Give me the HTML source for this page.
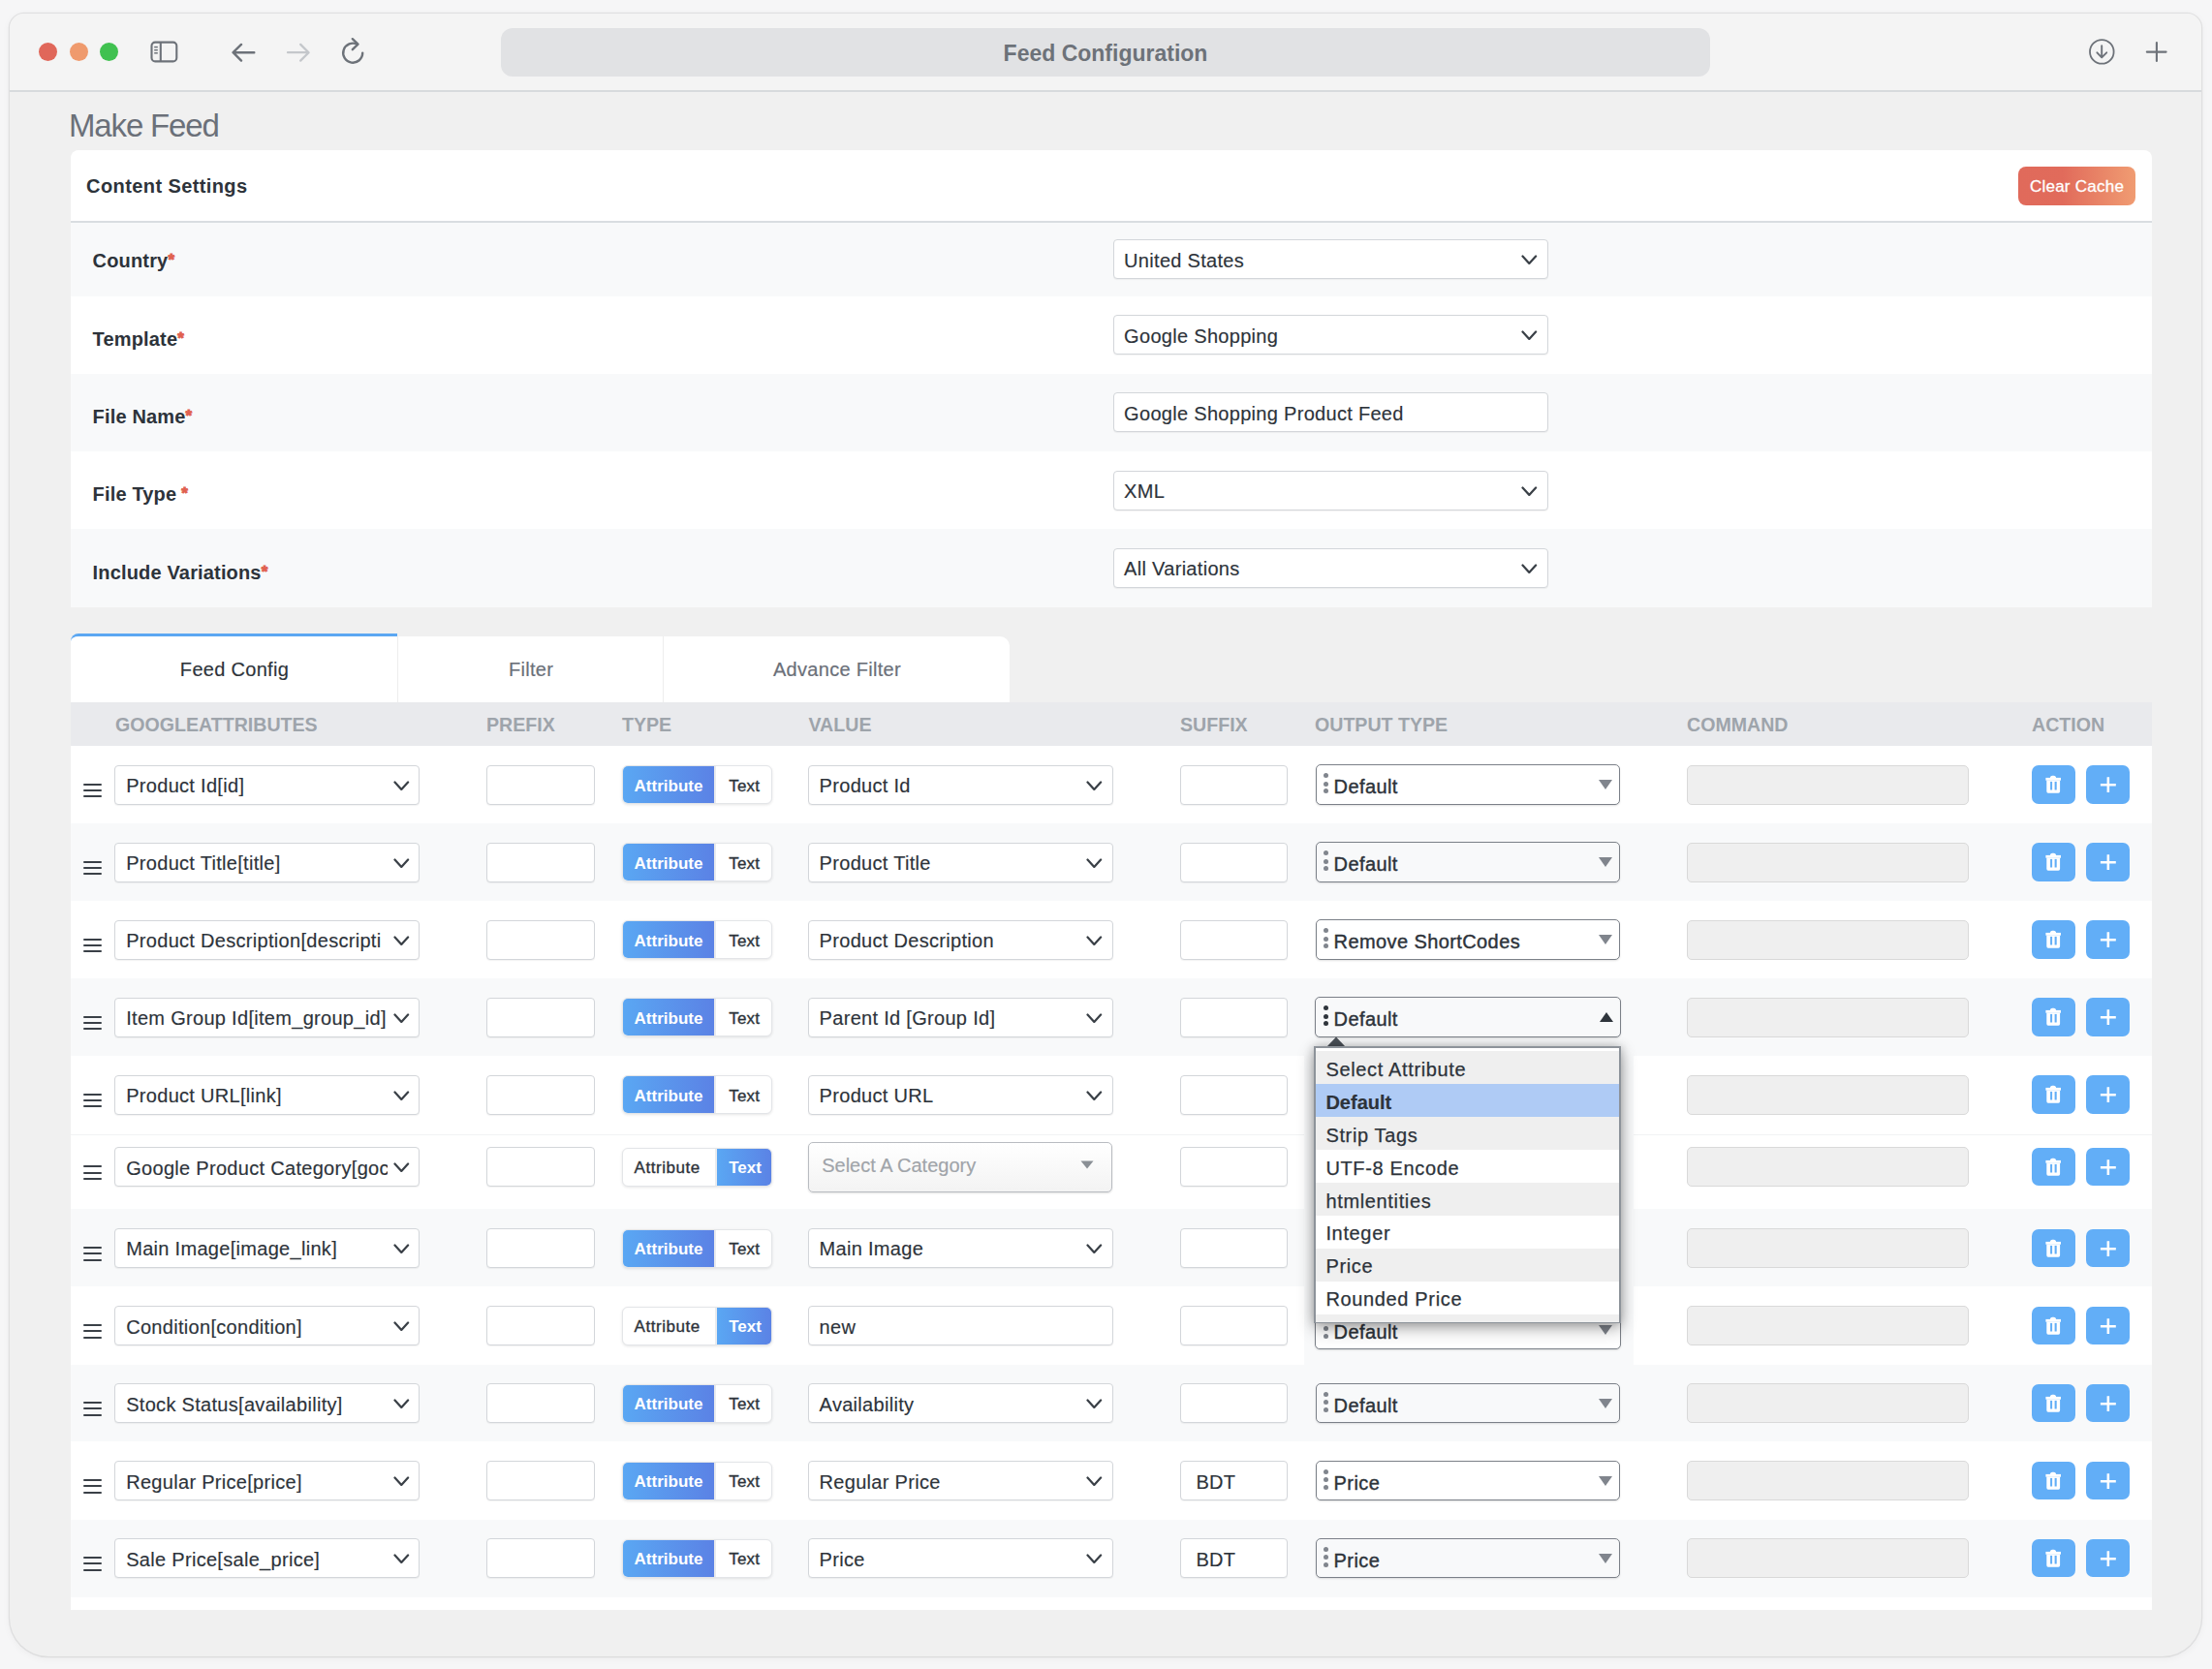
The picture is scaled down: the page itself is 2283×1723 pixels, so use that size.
<!DOCTYPE html><html><head><meta charset="utf-8"><style>
*{box-sizing:border-box;margin:0;padding:0}
html,body{width:2283px;height:1723px;overflow:hidden;background:#f6f6f7;font-family:"Liberation Sans", sans-serif;color:#2d333a}
.a{position:absolute}
.win{position:absolute;left:9.5px;top:13.5px;width:2262px;height:1696.5px;border-radius:15px 15px 40px 40px;background:#f0f0f0;overflow:hidden;box-shadow:0 0 0 1.3px rgba(0,0,0,0.075),0 2px 8px rgba(0,0,0,0.05)}
.tb{position:absolute;left:0;top:0;width:2262px;height:81px;background:#f4f4f4;border-bottom:2px solid #d7dadd}
.url{position:absolute;left:507.5px;top:15.5px;width:1248px;height:50px;border-radius:12px;background:#e1e2e4}
.card{position:absolute;background:#fff}
.lbl{position:absolute;margin-left:-0.4px;left:96px;font-weight:700;font-size:20px;line-height:20px;letter-spacing:0.16px;white-space:nowrap;color:#2d333a}
.req{color:#e0604f;-webkit-text-stroke:0.9px #e0604f;font-size:17px;vertical-align:2px}
.inp{position:absolute;background:#fff;border:1.5px solid #d3d6da;border-radius:4px;height:41px;box-shadow:0 1px 1px rgba(0,0,0,0.05)}
.txt{position:absolute;margin-left:-1.4px;font-size:20px;line-height:24px;letter-spacing:0.3px;-webkit-text-stroke:0.15px currentColor;white-space:nowrap;color:#2d333a}
.hd{position:absolute;top:737.5px;font-weight:700;font-size:19.6px;line-height:20px;color:#9ea4ab;white-space:nowrap}
.tog{position:absolute;margin-left:-1px;height:40px;width:155px;border-radius:6px;background:#fff;border:1px solid #e3e5e8;box-shadow:0 1px 3px rgba(0,0,0,0.10);overflow:hidden}
.on{position:absolute;top:0;height:100%;background:linear-gradient(90deg,#5aa7f3,#5b82e5)}
.tg{position:absolute;font-size:17px;line-height:17px;white-space:nowrap}
.cmd{position:absolute;left:1741px;width:291px;height:41px;background:#efefef;border:1.5px solid #d9d9d9;border-radius:5px}
.btn{position:absolute;width:45px;height:39.2px;border-radius:7px;background:#62aef7}
.ot{position:absolute;left:1357.5px;width:314.5px;height:41.5px;border:1.6px solid #7b8088;border-radius:5px;box-shadow:0 1px 2px rgba(0,0,0,0.12)}
</style></head><body><div class="win"><div class="tb"><div class="a" style="left:30.6px;top:30.4px;width:19.2px;height:19.2px;border-radius:50%;background:#e0675a"></div><div class="a" style="left:62.4px;top:30.4px;width:19.2px;height:19.2px;border-radius:50%;background:#ef9a6d"></div><div class="a" style="left:93.5px;top:30.4px;width:19.2px;height:19.2px;border-radius:50%;background:#40c150"></div><div class="url"></div><div class="a" style="left:507.5px;top:16.6px;width:1248px;height:50px;text-align:center;font-weight:700;font-size:23px;line-height:50px;color:#6d7279">Feed Configuration</div></div></div><svg class="a" style="left:0;top:0;z-index:5" width="2283" height="120" viewBox="0 0 2283 120">
<rect x="156.5" y="43.6" width="25.8" height="19.8" rx="3.6" fill="none" stroke="#6d7279" stroke-width="2.1"/>
<line x1="165.8" y1="43.6" x2="165.8" y2="63.4" stroke="#6d7279" stroke-width="2.1"/>
<line x1="159.2" y1="48.6" x2="162.8" y2="48.6" stroke="#6d7279" stroke-width="1.5"/>
<line x1="159.2" y1="51.7" x2="162.8" y2="51.7" stroke="#6d7279" stroke-width="1.5"/>
<line x1="159.2" y1="54.8" x2="162.8" y2="54.8" stroke="#6d7279" stroke-width="1.5"/>
<path d="M262.3 54.2 H241 M249 45.9 L240.6 54.2 L249 62.6" fill="none" stroke="#6d7279" stroke-width="2.4" stroke-linecap="round" stroke-linejoin="round"/>
<path d="M297 54.2 H318 M310.2 45.9 L318.6 54.2 L310.2 62.6" fill="none" stroke="#c4c7cb" stroke-width="2.3" stroke-linecap="round" stroke-linejoin="round"/>
<path d="M374.2 54.6 A10 10 0 1 1 368.8 45.8" fill="none" stroke="#6d7279" stroke-width="2.4" stroke-linecap="round"/>
<path d="M363.8 40.2 L369.5 45.6 L363.8 51.2" fill="none" stroke="#6d7279" stroke-width="2.4" stroke-linecap="round" stroke-linejoin="round"/>
<circle cx="2169.3" cy="53.4" r="12.3" fill="none" stroke="#6d7279" stroke-width="1.8"/>
<path d="M2169.2 47.2 V59.2 M2164.4 54.3 L2169.2 59.4 L2174.2 54.3" fill="none" stroke="#6d7279" stroke-width="1.9" stroke-linecap="round" stroke-linejoin="round"/>
<path d="M2225.9 44 V63 M2215.8 53.6 H2235.6" fill="none" stroke="#6d7279" stroke-width="2.1" stroke-linecap="round"/>
</svg><div class="a" style="left:71px;top:111.7px;font-size:33px;line-height:36px;letter-spacing:-1.15px;color:#6b7079;white-space:nowrap">Make Feed</div><div class="card" style="left:73px;top:155px;width:2148px;height:472px;border-radius:8px 8px 0 0;overflow:hidden"><div class="a" style="left:0;top:73px;width:2148px;height:1.6px;background:#d9dde1"></div><div class="a" style="left:0;top:75px;width:2148px;height:76px;background:#f8f9fa"></div><div class="a" style="left:0;top:231px;width:2148px;height:80px;background:#f8f9fa"></div><div class="a" style="left:0;top:391px;width:2148px;height:81px;background:#f8f9fa"></div></div><div class="lbl" style="left:89.5px;top:182px;font-size:20px;letter-spacing:0.4px">Content Settings</div><div class="a" style="left:2083px;top:172px;width:121px;height:40px;border-radius:8px;background:linear-gradient(90deg,#e06a5b 0%,#e16b5b 38%,#f09c72 100%)"></div><div class="a" style="left:2083px;top:172px;width:121px;height:40px;line-height:42px;text-align:center;color:#fff;font-size:17px;letter-spacing:0.25px;-webkit-text-stroke:0.3px #fff">Clear Cache</div><div class="lbl" style="top:258.9px">Country<span class="req">*</span></div><div class="lbl" style="top:339.7px">Template<span class="req">*</span></div><div class="lbl" style="top:420px">File Name<span class="req">*</span></div><div class="lbl" style="top:500px">File Type<span class="req"> *</span></div><div class="lbl" style="top:580.5px">Include Variations<span class="req">*</span></div><div class="inp" style="left:1148.5px;top:247.2px;width:449px"></div><div class="txt" style="left:1161.5px;top:256.7px">United States</div><svg class="a" style="left:1569.5px;top:263.2px" width="17" height="11" viewBox="0 0 17 11"><path d="M1.5 1.5 L8.3 8.9 L15.1 1.5" fill="none" stroke="#3a4047" stroke-width="2.25" stroke-linecap="round" stroke-linejoin="round"/></svg><div class="inp" style="left:1148.5px;top:325.4px;width:449px"></div><div class="txt" style="left:1161.5px;top:334.9px">Google Shopping</div><svg class="a" style="left:1569.5px;top:341.4px" width="17" height="11" viewBox="0 0 17 11"><path d="M1.5 1.5 L8.3 8.9 L15.1 1.5" fill="none" stroke="#3a4047" stroke-width="2.25" stroke-linecap="round" stroke-linejoin="round"/></svg><div class="inp" style="left:1148.5px;top:405.4px;width:449px"></div><div class="txt" style="left:1161.5px;top:414.9px">Google Shopping Product Feed</div><div class="inp" style="left:1148.5px;top:485.5px;width:449px"></div><div class="txt" style="left:1161.5px;top:495.0px">XML</div><svg class="a" style="left:1569.5px;top:501.5px" width="17" height="11" viewBox="0 0 17 11"><path d="M1.5 1.5 L8.3 8.9 L15.1 1.5" fill="none" stroke="#3a4047" stroke-width="2.25" stroke-linecap="round" stroke-linejoin="round"/></svg><div class="inp" style="left:1148.5px;top:565.6px;width:449px"></div><div class="txt" style="left:1161.5px;top:575.1px">All Variations</div><svg class="a" style="left:1569.5px;top:581.6px" width="17" height="11" viewBox="0 0 17 11"><path d="M1.5 1.5 L8.3 8.9 L15.1 1.5" fill="none" stroke="#3a4047" stroke-width="2.25" stroke-linecap="round" stroke-linejoin="round"/></svg><div class="card" style="left:73px;top:654px;width:337px;height:71px;border-radius:8px 0 0 0;border-top:3px solid #5ba7f2"></div><div class="card" style="left:410px;top:657px;width:274px;height:68px;border-left:1px solid #ededed"></div><div class="card" style="left:684px;top:657px;width:358px;height:68px;border-left:1px solid #ededed;border-radius:0 10px 0 0"></div><div class="txt" style="margin-left:0;left:73.5px;width:337px;text-align:center;top:679px">Feed Config</div><div class="txt" style="margin-left:0;left:411px;width:274px;text-align:center;top:679px;color:#6b7079;-webkit-text-stroke:0.2px #6b7079">Filter</div><div class="txt" style="margin-left:0;left:685px;width:358px;text-align:center;top:679px;color:#6b7079;-webkit-text-stroke:0.2px #6b7079">Advance Filter</div><div class="card" style="left:73px;top:725px;width:2148px;height:937px"></div><div class="a" style="left:73px;top:725px;width:2148px;height:45px;background:#e9eaed"></div><div class="hd" style="left:119px">GOOGLEATTRIBUTES</div><div class="hd" style="left:502px">PREFIX</div><div class="hd" style="left:642px">TYPE</div><div class="hd" style="left:834.5px">VALUE</div><div class="hd" style="left:1218px">SUFFIX</div><div class="hd" style="left:1357px">OUTPUT TYPE</div><div class="hd" style="left:1741px">COMMAND</div><div class="hd" style="left:2097px">ACTION</div><div class="a" style="left:86px;top:808.5px;width:19px;height:2px;background:#3a4047;border-radius:1px"></div><div class="a" style="left:86px;top:814.7px;width:19px;height:2px;background:#3a4047;border-radius:1px"></div><div class="a" style="left:86px;top:821.2px;width:19px;height:2px;background:#3a4047;border-radius:1px"></div><div class="inp" style="left:118.3px;top:789.5px;width:314.7px"></div><div class="txt" style="left:131.6px;top:799.0px;width:270px;overflow:hidden">Product Id[id]</div><svg class="a" style="left:405.5px;top:805.5px" width="17" height="11" viewBox="0 0 17 11"><path d="M1.5 1.5 L8.3 8.9 L15.1 1.5" fill="none" stroke="#3a4047" stroke-width="2.25" stroke-linecap="round" stroke-linejoin="round"/></svg><div class="inp" style="left:502.3px;top:789.5px;width:111.4px"></div><div class="tog" style="left:642.8px;top:790.3px"><div class="on" style="left:0;width:94.4px"></div><div class="tg" style="left:11.8px;top:11.4px;color:#fff;font-weight:700">Attribute</div><div class="a" style="left:94.4px;top:0;width:2px;height:100%;background:#e9ebee"></div><div class="tg" style="left:109.4px;top:11.4px;color:#2d333a;-webkit-text-stroke:0.35px #2d333a;letter-spacing:0.2px">Text</div></div><div class="inp" style="left:834px;top:789.5px;width:314.5px"></div><div class="txt" style="left:847px;top:799.0px">Product Id</div><svg class="a" style="left:1121px;top:805.5px" width="17" height="11" viewBox="0 0 17 11"><path d="M1.5 1.5 L8.3 8.9 L15.1 1.5" fill="none" stroke="#3a4047" stroke-width="2.25" stroke-linecap="round" stroke-linejoin="round"/></svg><div class="inp" style="left:1218.3px;top:789.5px;width:111.2px"></div><div class="ot" style="top:789.2px;background:#fff"></div><div class="a" style="left:1365.5px;top:798.3px;width:5px;height:5px;border-radius:50%;background:#80858d"></div><div class="a" style="left:1365.5px;top:806.5px;width:5px;height:5px;border-radius:50%;background:#80858d"></div><div class="a" style="left:1365.5px;top:814.3px;width:5px;height:5px;border-radius:50%;background:#80858d"></div><div class="txt" style="left:1378px;top:800.2px;font-size:20px;letter-spacing:0.4px;-webkit-text-stroke:0.4px #2d333a">Default</div><svg class="a" style="left:1650px;top:805.0px" width="14" height="10" viewBox="0 0 14 10"><path d="M0 0 H14 L7 10 Z" fill="#80858d"/></svg><div class="cmd" style="top:789.6px"></div><div class="btn" style="left:2097px;top:790.4px"><svg class="a" style="left:0;top:0" width="45" height="39" viewBox="0 0 45 39"><path d="M14.4 12.9 H30 V15.7 H14.4 Z" fill="#fff"/><path d="M18.8 13.3 Q18.9 10.7 21.4 10.7 H22.5 Q25.1 10.7 25.1 13.3 Z" fill="#fff"/><path d="M15.3 15.4 H29.1 V27.1 Q29.1 28.7 27.5 28.7 H16.9 Q15.3 28.7 15.3 27.1 Z" fill="#fff"/><rect x="19.1" y="16.9" width="2" height="8.6" fill="#62aef7"/><rect x="23.6" y="16.9" width="2.1" height="8.6" fill="#62aef7"/></svg></div><div class="btn" style="left:2153px;top:790.4px"><svg class="a" style="left:0;top:0" width="45" height="39" viewBox="0 0 45 39"><path d="M22.85 12.2 V28.1 M14.9 20.3 H30.8" stroke="#fff" stroke-width="2.55"/></svg></div><div class="a" style="left:73px;top:850px;width:2148px;height:80px;background:#f8f9fa"></div><div class="a" style="left:86px;top:888.5px;width:19px;height:2px;background:#3a4047;border-radius:1px"></div><div class="a" style="left:86px;top:894.7px;width:19px;height:2px;background:#3a4047;border-radius:1px"></div><div class="a" style="left:86px;top:901.2px;width:19px;height:2px;background:#3a4047;border-radius:1px"></div><div class="inp" style="left:118.3px;top:869.5px;width:314.7px"></div><div class="txt" style="left:131.6px;top:879.0px;width:270px;overflow:hidden">Product Title[title]</div><svg class="a" style="left:405.5px;top:885.5px" width="17" height="11" viewBox="0 0 17 11"><path d="M1.5 1.5 L8.3 8.9 L15.1 1.5" fill="none" stroke="#3a4047" stroke-width="2.25" stroke-linecap="round" stroke-linejoin="round"/></svg><div class="inp" style="left:502.3px;top:869.5px;width:111.4px"></div><div class="tog" style="left:642.8px;top:870.3px"><div class="on" style="left:0;width:94.4px"></div><div class="tg" style="left:11.8px;top:11.4px;color:#fff;font-weight:700">Attribute</div><div class="a" style="left:94.4px;top:0;width:2px;height:100%;background:#e9ebee"></div><div class="tg" style="left:109.4px;top:11.4px;color:#2d333a;-webkit-text-stroke:0.35px #2d333a;letter-spacing:0.2px">Text</div></div><div class="inp" style="left:834px;top:869.5px;width:314.5px"></div><div class="txt" style="left:847px;top:879.0px">Product Title</div><svg class="a" style="left:1121px;top:885.5px" width="17" height="11" viewBox="0 0 17 11"><path d="M1.5 1.5 L8.3 8.9 L15.1 1.5" fill="none" stroke="#3a4047" stroke-width="2.25" stroke-linecap="round" stroke-linejoin="round"/></svg><div class="inp" style="left:1218.3px;top:869.5px;width:111.2px"></div><div class="ot" style="top:869.2px;background:#f8f9fa"></div><div class="a" style="left:1365.5px;top:878.3px;width:5px;height:5px;border-radius:50%;background:#80858d"></div><div class="a" style="left:1365.5px;top:886.5px;width:5px;height:5px;border-radius:50%;background:#80858d"></div><div class="a" style="left:1365.5px;top:894.3px;width:5px;height:5px;border-radius:50%;background:#80858d"></div><div class="txt" style="left:1378px;top:880.2px;font-size:20px;letter-spacing:0.4px;-webkit-text-stroke:0.4px #2d333a">Default</div><svg class="a" style="left:1650px;top:885.0px" width="14" height="10" viewBox="0 0 14 10"><path d="M0 0 H14 L7 10 Z" fill="#80858d"/></svg><div class="cmd" style="top:869.6px"></div><div class="btn" style="left:2097px;top:870.4px"><svg class="a" style="left:0;top:0" width="45" height="39" viewBox="0 0 45 39"><path d="M14.4 12.9 H30 V15.7 H14.4 Z" fill="#fff"/><path d="M18.8 13.3 Q18.9 10.7 21.4 10.7 H22.5 Q25.1 10.7 25.1 13.3 Z" fill="#fff"/><path d="M15.3 15.4 H29.1 V27.1 Q29.1 28.7 27.5 28.7 H16.9 Q15.3 28.7 15.3 27.1 Z" fill="#fff"/><rect x="19.1" y="16.9" width="2" height="8.6" fill="#62aef7"/><rect x="23.6" y="16.9" width="2.1" height="8.6" fill="#62aef7"/></svg></div><div class="btn" style="left:2153px;top:870.4px"><svg class="a" style="left:0;top:0" width="45" height="39" viewBox="0 0 45 39"><path d="M22.85 12.2 V28.1 M14.9 20.3 H30.8" stroke="#fff" stroke-width="2.55"/></svg></div><div class="a" style="left:86px;top:968.5px;width:19px;height:2px;background:#3a4047;border-radius:1px"></div><div class="a" style="left:86px;top:974.7px;width:19px;height:2px;background:#3a4047;border-radius:1px"></div><div class="a" style="left:86px;top:981.2px;width:19px;height:2px;background:#3a4047;border-radius:1px"></div><div class="inp" style="left:118.3px;top:949.5px;width:314.7px"></div><div class="txt" style="left:131.6px;top:959.0px;width:270px;overflow:hidden">Product Description[descripti</div><svg class="a" style="left:405.5px;top:965.5px" width="17" height="11" viewBox="0 0 17 11"><path d="M1.5 1.5 L8.3 8.9 L15.1 1.5" fill="none" stroke="#3a4047" stroke-width="2.25" stroke-linecap="round" stroke-linejoin="round"/></svg><div class="inp" style="left:502.3px;top:949.5px;width:111.4px"></div><div class="tog" style="left:642.8px;top:950.3px"><div class="on" style="left:0;width:94.4px"></div><div class="tg" style="left:11.8px;top:11.4px;color:#fff;font-weight:700">Attribute</div><div class="a" style="left:94.4px;top:0;width:2px;height:100%;background:#e9ebee"></div><div class="tg" style="left:109.4px;top:11.4px;color:#2d333a;-webkit-text-stroke:0.35px #2d333a;letter-spacing:0.2px">Text</div></div><div class="inp" style="left:834px;top:949.5px;width:314.5px"></div><div class="txt" style="left:847px;top:959.0px">Product Description</div><svg class="a" style="left:1121px;top:965.5px" width="17" height="11" viewBox="0 0 17 11"><path d="M1.5 1.5 L8.3 8.9 L15.1 1.5" fill="none" stroke="#3a4047" stroke-width="2.25" stroke-linecap="round" stroke-linejoin="round"/></svg><div class="inp" style="left:1218.3px;top:949.5px;width:111.2px"></div><div class="ot" style="top:949.2px;background:#fff"></div><div class="a" style="left:1365.5px;top:958.3px;width:5px;height:5px;border-radius:50%;background:#80858d"></div><div class="a" style="left:1365.5px;top:966.5px;width:5px;height:5px;border-radius:50%;background:#80858d"></div><div class="a" style="left:1365.5px;top:974.3px;width:5px;height:5px;border-radius:50%;background:#80858d"></div><div class="txt" style="left:1378px;top:960.2px;font-size:20px;letter-spacing:0.4px;-webkit-text-stroke:0.4px #2d333a">Remove ShortCodes</div><svg class="a" style="left:1650px;top:965.0px" width="14" height="10" viewBox="0 0 14 10"><path d="M0 0 H14 L7 10 Z" fill="#80858d"/></svg><div class="cmd" style="top:949.6px"></div><div class="btn" style="left:2097px;top:950.4px"><svg class="a" style="left:0;top:0" width="45" height="39" viewBox="0 0 45 39"><path d="M14.4 12.9 H30 V15.7 H14.4 Z" fill="#fff"/><path d="M18.8 13.3 Q18.9 10.7 21.4 10.7 H22.5 Q25.1 10.7 25.1 13.3 Z" fill="#fff"/><path d="M15.3 15.4 H29.1 V27.1 Q29.1 28.7 27.5 28.7 H16.9 Q15.3 28.7 15.3 27.1 Z" fill="#fff"/><rect x="19.1" y="16.9" width="2" height="8.6" fill="#62aef7"/><rect x="23.6" y="16.9" width="2.1" height="8.6" fill="#62aef7"/></svg></div><div class="btn" style="left:2153px;top:950.4px"><svg class="a" style="left:0;top:0" width="45" height="39" viewBox="0 0 45 39"><path d="M22.85 12.2 V28.1 M14.9 20.3 H30.8" stroke="#fff" stroke-width="2.55"/></svg></div><div class="a" style="left:73px;top:1010px;width:2148px;height:80px;background:#f8f9fa"></div><div class="a" style="left:86px;top:1048.5px;width:19px;height:2px;background:#3a4047;border-radius:1px"></div><div class="a" style="left:86px;top:1054.7px;width:19px;height:2px;background:#3a4047;border-radius:1px"></div><div class="a" style="left:86px;top:1061.2px;width:19px;height:2px;background:#3a4047;border-radius:1px"></div><div class="inp" style="left:118.3px;top:1029.5px;width:314.7px"></div><div class="txt" style="left:131.6px;top:1039.0px;width:270px;overflow:hidden">Item Group Id[item_group_id]</div><svg class="a" style="left:405.5px;top:1045.5px" width="17" height="11" viewBox="0 0 17 11"><path d="M1.5 1.5 L8.3 8.9 L15.1 1.5" fill="none" stroke="#3a4047" stroke-width="2.25" stroke-linecap="round" stroke-linejoin="round"/></svg><div class="inp" style="left:502.3px;top:1029.5px;width:111.4px"></div><div class="tog" style="left:642.8px;top:1030.3px"><div class="on" style="left:0;width:94.4px"></div><div class="tg" style="left:11.8px;top:11.4px;color:#fff;font-weight:700">Attribute</div><div class="a" style="left:94.4px;top:0;width:2px;height:100%;background:#e9ebee"></div><div class="tg" style="left:109.4px;top:11.4px;color:#2d333a;-webkit-text-stroke:0.35px #2d333a;letter-spacing:0.2px">Text</div></div><div class="inp" style="left:834px;top:1029.5px;width:314.5px"></div><div class="txt" style="left:847px;top:1039.0px">Parent Id [Group Id]</div><svg class="a" style="left:1121px;top:1045.5px" width="17" height="11" viewBox="0 0 17 11"><path d="M1.5 1.5 L8.3 8.9 L15.1 1.5" fill="none" stroke="#3a4047" stroke-width="2.25" stroke-linecap="round" stroke-linejoin="round"/></svg><div class="inp" style="left:1218.3px;top:1029.5px;width:111.2px"></div><div class="ot" style="left:1356.6px;width:316.7px;top:1029.2px;background:#f8f9fa"></div><div class="a" style="left:1365.5px;top:1038.3px;width:5px;height:5px;border-radius:50%;background:#2f353c"></div><div class="a" style="left:1365.5px;top:1046.5px;width:5px;height:5px;border-radius:50%;background:#2f353c"></div><div class="a" style="left:1365.5px;top:1054.3px;width:5px;height:5px;border-radius:50%;background:#2f353c"></div><div class="txt" style="left:1378px;top:1040.2px;font-size:20px;letter-spacing:0.4px;-webkit-text-stroke:0.4px #2d333a">Default</div><svg class="a" style="left:1651px;top:1045.0px" width="14" height="10" viewBox="0 0 14 10"><path d="M7 0 L14 10 H0 Z" fill="#2f353c"/></svg><div class="cmd" style="top:1029.6px"></div><div class="btn" style="left:2097px;top:1030.4px"><svg class="a" style="left:0;top:0" width="45" height="39" viewBox="0 0 45 39"><path d="M14.4 12.9 H30 V15.7 H14.4 Z" fill="#fff"/><path d="M18.8 13.3 Q18.9 10.7 21.4 10.7 H22.5 Q25.1 10.7 25.1 13.3 Z" fill="#fff"/><path d="M15.3 15.4 H29.1 V27.1 Q29.1 28.7 27.5 28.7 H16.9 Q15.3 28.7 15.3 27.1 Z" fill="#fff"/><rect x="19.1" y="16.9" width="2" height="8.6" fill="#62aef7"/><rect x="23.6" y="16.9" width="2.1" height="8.6" fill="#62aef7"/></svg></div><div class="btn" style="left:2153px;top:1030.4px"><svg class="a" style="left:0;top:0" width="45" height="39" viewBox="0 0 45 39"><path d="M22.85 12.2 V28.1 M14.9 20.3 H30.8" stroke="#fff" stroke-width="2.55"/></svg></div><div class="a" style="left:86px;top:1128.5px;width:19px;height:2px;background:#3a4047;border-radius:1px"></div><div class="a" style="left:86px;top:1134.7px;width:19px;height:2px;background:#3a4047;border-radius:1px"></div><div class="a" style="left:86px;top:1141.2px;width:19px;height:2px;background:#3a4047;border-radius:1px"></div><div class="inp" style="left:118.3px;top:1109.5px;width:314.7px"></div><div class="txt" style="left:131.6px;top:1119.0px;width:270px;overflow:hidden">Product URL[link]</div><svg class="a" style="left:405.5px;top:1125.5px" width="17" height="11" viewBox="0 0 17 11"><path d="M1.5 1.5 L8.3 8.9 L15.1 1.5" fill="none" stroke="#3a4047" stroke-width="2.25" stroke-linecap="round" stroke-linejoin="round"/></svg><div class="inp" style="left:502.3px;top:1109.5px;width:111.4px"></div><div class="tog" style="left:642.8px;top:1110.3px"><div class="on" style="left:0;width:94.4px"></div><div class="tg" style="left:11.8px;top:11.4px;color:#fff;font-weight:700">Attribute</div><div class="a" style="left:94.4px;top:0;width:2px;height:100%;background:#e9ebee"></div><div class="tg" style="left:109.4px;top:11.4px;color:#2d333a;-webkit-text-stroke:0.35px #2d333a;letter-spacing:0.2px">Text</div></div><div class="inp" style="left:834px;top:1109.5px;width:314.5px"></div><div class="txt" style="left:847px;top:1119.0px">Product URL</div><svg class="a" style="left:1121px;top:1125.5px" width="17" height="11" viewBox="0 0 17 11"><path d="M1.5 1.5 L8.3 8.9 L15.1 1.5" fill="none" stroke="#3a4047" stroke-width="2.25" stroke-linecap="round" stroke-linejoin="round"/></svg><div class="inp" style="left:1218.3px;top:1109.5px;width:111.2px"></div><div class="ot" style="top:1109.2px;background:#fff"></div><div class="a" style="left:1365.5px;top:1118.3px;width:5px;height:5px;border-radius:50%;background:#80858d"></div><div class="a" style="left:1365.5px;top:1126.5px;width:5px;height:5px;border-radius:50%;background:#80858d"></div><div class="a" style="left:1365.5px;top:1134.3px;width:5px;height:5px;border-radius:50%;background:#80858d"></div><div class="txt" style="left:1378px;top:1120.2px;font-size:20px;letter-spacing:0.4px;-webkit-text-stroke:0.4px #2d333a">Default</div><svg class="a" style="left:1650px;top:1125.0px" width="14" height="10" viewBox="0 0 14 10"><path d="M0 0 H14 L7 10 Z" fill="#80858d"/></svg><div class="cmd" style="top:1109.6px"></div><div class="btn" style="left:2097px;top:1110.4px"><svg class="a" style="left:0;top:0" width="45" height="39" viewBox="0 0 45 39"><path d="M14.4 12.9 H30 V15.7 H14.4 Z" fill="#fff"/><path d="M18.8 13.3 Q18.9 10.7 21.4 10.7 H22.5 Q25.1 10.7 25.1 13.3 Z" fill="#fff"/><path d="M15.3 15.4 H29.1 V27.1 Q29.1 28.7 27.5 28.7 H16.9 Q15.3 28.7 15.3 27.1 Z" fill="#fff"/><rect x="19.1" y="16.9" width="2" height="8.6" fill="#62aef7"/><rect x="23.6" y="16.9" width="2.1" height="8.6" fill="#62aef7"/></svg></div><div class="btn" style="left:2153px;top:1110.4px"><svg class="a" style="left:0;top:0" width="45" height="39" viewBox="0 0 45 39"><path d="M22.85 12.2 V28.1 M14.9 20.3 H30.8" stroke="#fff" stroke-width="2.55"/></svg></div><div class="a" style="left:73px;top:1171px;width:2148px;height:1px;background:#f1f2f4"></div><div class="a" style="left:86px;top:1203.3px;width:19px;height:2px;background:#3a4047;border-radius:1px"></div><div class="a" style="left:86px;top:1209.5px;width:19px;height:2px;background:#3a4047;border-radius:1px"></div><div class="a" style="left:86px;top:1216.0px;width:19px;height:2px;background:#3a4047;border-radius:1px"></div><div class="inp" style="left:118.3px;top:1184.3px;width:314.7px"></div><div class="txt" style="left:131.6px;top:1193.8px;width:270px;overflow:hidden">Google Product Category[goc</div><svg class="a" style="left:405.5px;top:1200.3px" width="17" height="11" viewBox="0 0 17 11"><path d="M1.5 1.5 L8.3 8.9 L15.1 1.5" fill="none" stroke="#3a4047" stroke-width="2.25" stroke-linecap="round" stroke-linejoin="round"/></svg><div class="inp" style="left:502.3px;top:1184.3px;width:111.4px"></div><div class="tog" style="left:642.8px;top:1185.1px"><div class="on" style="left:97px;width:57px"></div><div class="a" style="left:95px;top:0;width:2px;height:100%;background:#e9ebee"></div><div class="tg" style="left:11.8px;top:11.4px;color:#2d333a;-webkit-text-stroke:0.35px #2d333a;letter-spacing:0.55px">Attribute</div><div class="tg" style="left:109.4px;top:11.4px;color:#fff;font-weight:700">Text</div></div><div class="a" style="left:834.4px;top:1178.5px;width:314px;height:52.2px;border:1.5px solid #b9bcc1;border-radius:5px;background:linear-gradient(#ffffff,#f3f3f3);box-shadow:0 1px 2px rgba(0,0,0,0.12)"></div><div class="txt" style="left:849.6px;top:1191px;color:#a0a4a9;letter-spacing:0">Select A Category</div><svg class="a" style="left:1115px;top:1198px" width="14" height="9" viewBox="0 0 14 9"><path d="M0.5 0.5 H13.5 L7 8.5 Z" fill="#8a8f95"/></svg><div class="inp" style="left:1218.3px;top:1184.3px;width:111.2px"></div><div class="cmd" style="top:1184.3999999999999px"></div><div class="btn" style="left:2097px;top:1185.2px"><svg class="a" style="left:0;top:0" width="45" height="39" viewBox="0 0 45 39"><path d="M14.4 12.9 H30 V15.7 H14.4 Z" fill="#fff"/><path d="M18.8 13.3 Q18.9 10.7 21.4 10.7 H22.5 Q25.1 10.7 25.1 13.3 Z" fill="#fff"/><path d="M15.3 15.4 H29.1 V27.1 Q29.1 28.7 27.5 28.7 H16.9 Q15.3 28.7 15.3 27.1 Z" fill="#fff"/><rect x="19.1" y="16.9" width="2" height="8.6" fill="#62aef7"/><rect x="23.6" y="16.9" width="2.1" height="8.6" fill="#62aef7"/></svg></div><div class="btn" style="left:2153px;top:1185.2px"><svg class="a" style="left:0;top:0" width="45" height="39" viewBox="0 0 45 39"><path d="M22.85 12.2 V28.1 M14.9 20.3 H30.8" stroke="#fff" stroke-width="2.55"/></svg></div><div class="a" style="left:73px;top:1248.3px;width:2148px;height:80.20000000000005px;background:#f8f9fa"></div><div class="a" style="left:86px;top:1286.8px;width:19px;height:2px;background:#3a4047;border-radius:1px"></div><div class="a" style="left:86px;top:1293.0px;width:19px;height:2px;background:#3a4047;border-radius:1px"></div><div class="a" style="left:86px;top:1299.5px;width:19px;height:2px;background:#3a4047;border-radius:1px"></div><div class="inp" style="left:118.3px;top:1267.8px;width:314.7px"></div><div class="txt" style="left:131.6px;top:1277.3px;width:270px;overflow:hidden">Main Image[image_link]</div><svg class="a" style="left:405.5px;top:1283.8px" width="17" height="11" viewBox="0 0 17 11"><path d="M1.5 1.5 L8.3 8.9 L15.1 1.5" fill="none" stroke="#3a4047" stroke-width="2.25" stroke-linecap="round" stroke-linejoin="round"/></svg><div class="inp" style="left:502.3px;top:1267.8px;width:111.4px"></div><div class="tog" style="left:642.8px;top:1268.6px"><div class="on" style="left:0;width:94.4px"></div><div class="tg" style="left:11.8px;top:11.4px;color:#fff;font-weight:700">Attribute</div><div class="a" style="left:94.4px;top:0;width:2px;height:100%;background:#e9ebee"></div><div class="tg" style="left:109.4px;top:11.4px;color:#2d333a;-webkit-text-stroke:0.35px #2d333a;letter-spacing:0.2px">Text</div></div><div class="inp" style="left:834px;top:1267.8px;width:314.5px"></div><div class="txt" style="left:847px;top:1277.3px">Main Image</div><svg class="a" style="left:1121px;top:1283.8px" width="17" height="11" viewBox="0 0 17 11"><path d="M1.5 1.5 L8.3 8.9 L15.1 1.5" fill="none" stroke="#3a4047" stroke-width="2.25" stroke-linecap="round" stroke-linejoin="round"/></svg><div class="inp" style="left:1218.3px;top:1267.8px;width:111.2px"></div><div class="ot" style="top:1267.5px;background:#f8f9fa"></div><div class="a" style="left:1365.5px;top:1276.6px;width:5px;height:5px;border-radius:50%;background:#80858d"></div><div class="a" style="left:1365.5px;top:1284.8px;width:5px;height:5px;border-radius:50%;background:#80858d"></div><div class="a" style="left:1365.5px;top:1292.6px;width:5px;height:5px;border-radius:50%;background:#80858d"></div><div class="txt" style="left:1378px;top:1278.5px;font-size:20px;letter-spacing:0.4px;-webkit-text-stroke:0.4px #2d333a">Default</div><svg class="a" style="left:1650px;top:1283.3px" width="14" height="10" viewBox="0 0 14 10"><path d="M0 0 H14 L7 10 Z" fill="#80858d"/></svg><div class="cmd" style="top:1267.8999999999999px"></div><div class="btn" style="left:2097px;top:1268.7px"><svg class="a" style="left:0;top:0" width="45" height="39" viewBox="0 0 45 39"><path d="M14.4 12.9 H30 V15.7 H14.4 Z" fill="#fff"/><path d="M18.8 13.3 Q18.9 10.7 21.4 10.7 H22.5 Q25.1 10.7 25.1 13.3 Z" fill="#fff"/><path d="M15.3 15.4 H29.1 V27.1 Q29.1 28.7 27.5 28.7 H16.9 Q15.3 28.7 15.3 27.1 Z" fill="#fff"/><rect x="19.1" y="16.9" width="2" height="8.6" fill="#62aef7"/><rect x="23.6" y="16.9" width="2.1" height="8.6" fill="#62aef7"/></svg></div><div class="btn" style="left:2153px;top:1268.7px"><svg class="a" style="left:0;top:0" width="45" height="39" viewBox="0 0 45 39"><path d="M22.85 12.2 V28.1 M14.9 20.3 H30.8" stroke="#fff" stroke-width="2.55"/></svg></div><div class="a" style="left:1345.6px;top:1090px;width:340px;height:318.7px;background:#f8f9fa"></div><div class="a" style="left:86px;top:1367.0px;width:19px;height:2px;background:#3a4047;border-radius:1px"></div><div class="a" style="left:86px;top:1373.2px;width:19px;height:2px;background:#3a4047;border-radius:1px"></div><div class="a" style="left:86px;top:1379.7px;width:19px;height:2px;background:#3a4047;border-radius:1px"></div><div class="inp" style="left:118.3px;top:1348.0px;width:314.7px"></div><div class="txt" style="left:131.6px;top:1357.5px;width:270px;overflow:hidden">Condition[condition]</div><svg class="a" style="left:405.5px;top:1364.0px" width="17" height="11" viewBox="0 0 17 11"><path d="M1.5 1.5 L8.3 8.9 L15.1 1.5" fill="none" stroke="#3a4047" stroke-width="2.25" stroke-linecap="round" stroke-linejoin="round"/></svg><div class="inp" style="left:502.3px;top:1348.0px;width:111.4px"></div><div class="tog" style="left:642.8px;top:1348.8px"><div class="on" style="left:97px;width:57px"></div><div class="a" style="left:95px;top:0;width:2px;height:100%;background:#e9ebee"></div><div class="tg" style="left:11.8px;top:11.4px;color:#2d333a;-webkit-text-stroke:0.35px #2d333a;letter-spacing:0.55px">Attribute</div><div class="tg" style="left:109.4px;top:11.4px;color:#fff;font-weight:700">Text</div></div><div class="inp" style="left:834px;top:1348.0px;width:314.5px"></div><div class="txt" style="left:847px;top:1357.5px">new</div><div class="inp" style="left:1218.3px;top:1348.0px;width:111.2px"></div><div class="ot" style="left:1356.6px;width:316.7px;top:1351.7px;background:#fff"></div><div class="a" style="left:1365.5px;top:1360.8px;width:5px;height:5px;border-radius:50%;background:#80858d"></div><div class="a" style="left:1365.5px;top:1369.0px;width:5px;height:5px;border-radius:50%;background:#80858d"></div><div class="a" style="left:1365.5px;top:1376.8px;width:5px;height:5px;border-radius:50%;background:#80858d"></div><div class="txt" style="left:1378px;top:1362.7px;font-size:20px;letter-spacing:0.4px;-webkit-text-stroke:0.4px #2d333a">Default</div><svg class="a" style="left:1650px;top:1367.5px" width="14" height="10" viewBox="0 0 14 10"><path d="M0 0 H14 L7 10 Z" fill="#80858d"/></svg><div class="cmd" style="top:1348.1px"></div><div class="btn" style="left:2097px;top:1348.9px"><svg class="a" style="left:0;top:0" width="45" height="39" viewBox="0 0 45 39"><path d="M14.4 12.9 H30 V15.7 H14.4 Z" fill="#fff"/><path d="M18.8 13.3 Q18.9 10.7 21.4 10.7 H22.5 Q25.1 10.7 25.1 13.3 Z" fill="#fff"/><path d="M15.3 15.4 H29.1 V27.1 Q29.1 28.7 27.5 28.7 H16.9 Q15.3 28.7 15.3 27.1 Z" fill="#fff"/><rect x="19.1" y="16.9" width="2" height="8.6" fill="#62aef7"/><rect x="23.6" y="16.9" width="2.1" height="8.6" fill="#62aef7"/></svg></div><div class="btn" style="left:2153px;top:1348.9px"><svg class="a" style="left:0;top:0" width="45" height="39" viewBox="0 0 45 39"><path d="M22.85 12.2 V28.1 M14.9 20.3 H30.8" stroke="#fff" stroke-width="2.55"/></svg></div><div class="a" style="left:73px;top:1408.7px;width:2148px;height:79.79999999999995px;background:#f8f9fa"></div><div class="a" style="left:86px;top:1447.2px;width:19px;height:2px;background:#3a4047;border-radius:1px"></div><div class="a" style="left:86px;top:1453.4px;width:19px;height:2px;background:#3a4047;border-radius:1px"></div><div class="a" style="left:86px;top:1459.9px;width:19px;height:2px;background:#3a4047;border-radius:1px"></div><div class="inp" style="left:118.3px;top:1428.2px;width:314.7px"></div><div class="txt" style="left:131.6px;top:1437.7px;width:270px;overflow:hidden">Stock Status[availability]</div><svg class="a" style="left:405.5px;top:1444.2px" width="17" height="11" viewBox="0 0 17 11"><path d="M1.5 1.5 L8.3 8.9 L15.1 1.5" fill="none" stroke="#3a4047" stroke-width="2.25" stroke-linecap="round" stroke-linejoin="round"/></svg><div class="inp" style="left:502.3px;top:1428.2px;width:111.4px"></div><div class="tog" style="left:642.8px;top:1429.0px"><div class="on" style="left:0;width:94.4px"></div><div class="tg" style="left:11.8px;top:11.4px;color:#fff;font-weight:700">Attribute</div><div class="a" style="left:94.4px;top:0;width:2px;height:100%;background:#e9ebee"></div><div class="tg" style="left:109.4px;top:11.4px;color:#2d333a;-webkit-text-stroke:0.35px #2d333a;letter-spacing:0.2px">Text</div></div><div class="inp" style="left:834px;top:1428.2px;width:314.5px"></div><div class="txt" style="left:847px;top:1437.7px">Availability</div><svg class="a" style="left:1121px;top:1444.2px" width="17" height="11" viewBox="0 0 17 11"><path d="M1.5 1.5 L8.3 8.9 L15.1 1.5" fill="none" stroke="#3a4047" stroke-width="2.25" stroke-linecap="round" stroke-linejoin="round"/></svg><div class="inp" style="left:1218.3px;top:1428.2px;width:111.2px"></div><div class="ot" style="top:1427.9px;background:#f8f9fa"></div><div class="a" style="left:1365.5px;top:1437.0px;width:5px;height:5px;border-radius:50%;background:#80858d"></div><div class="a" style="left:1365.5px;top:1445.2px;width:5px;height:5px;border-radius:50%;background:#80858d"></div><div class="a" style="left:1365.5px;top:1453.0px;width:5px;height:5px;border-radius:50%;background:#80858d"></div><div class="txt" style="left:1378px;top:1438.9px;font-size:20px;letter-spacing:0.4px;-webkit-text-stroke:0.4px #2d333a">Default</div><svg class="a" style="left:1650px;top:1443.7px" width="14" height="10" viewBox="0 0 14 10"><path d="M0 0 H14 L7 10 Z" fill="#80858d"/></svg><div class="cmd" style="top:1428.3px"></div><div class="btn" style="left:2097px;top:1429.1000000000001px"><svg class="a" style="left:0;top:0" width="45" height="39" viewBox="0 0 45 39"><path d="M14.4 12.9 H30 V15.7 H14.4 Z" fill="#fff"/><path d="M18.8 13.3 Q18.9 10.7 21.4 10.7 H22.5 Q25.1 10.7 25.1 13.3 Z" fill="#fff"/><path d="M15.3 15.4 H29.1 V27.1 Q29.1 28.7 27.5 28.7 H16.9 Q15.3 28.7 15.3 27.1 Z" fill="#fff"/><rect x="19.1" y="16.9" width="2" height="8.6" fill="#62aef7"/><rect x="23.6" y="16.9" width="2.1" height="8.6" fill="#62aef7"/></svg></div><div class="btn" style="left:2153px;top:1429.1000000000001px"><svg class="a" style="left:0;top:0" width="45" height="39" viewBox="0 0 45 39"><path d="M22.85 12.2 V28.1 M14.9 20.3 H30.8" stroke="#fff" stroke-width="2.55"/></svg></div><div class="a" style="left:86px;top:1527.0px;width:19px;height:2px;background:#3a4047;border-radius:1px"></div><div class="a" style="left:86px;top:1533.2px;width:19px;height:2px;background:#3a4047;border-radius:1px"></div><div class="a" style="left:86px;top:1539.7px;width:19px;height:2px;background:#3a4047;border-radius:1px"></div><div class="inp" style="left:118.3px;top:1508.0px;width:314.7px"></div><div class="txt" style="left:131.6px;top:1517.5px;width:270px;overflow:hidden">Regular Price[price]</div><svg class="a" style="left:405.5px;top:1524.0px" width="17" height="11" viewBox="0 0 17 11"><path d="M1.5 1.5 L8.3 8.9 L15.1 1.5" fill="none" stroke="#3a4047" stroke-width="2.25" stroke-linecap="round" stroke-linejoin="round"/></svg><div class="inp" style="left:502.3px;top:1508.0px;width:111.4px"></div><div class="tog" style="left:642.8px;top:1508.8px"><div class="on" style="left:0;width:94.4px"></div><div class="tg" style="left:11.8px;top:11.4px;color:#fff;font-weight:700">Attribute</div><div class="a" style="left:94.4px;top:0;width:2px;height:100%;background:#e9ebee"></div><div class="tg" style="left:109.4px;top:11.4px;color:#2d333a;-webkit-text-stroke:0.35px #2d333a;letter-spacing:0.2px">Text</div></div><div class="inp" style="left:834px;top:1508.0px;width:314.5px"></div><div class="txt" style="left:847px;top:1517.5px">Regular Price</div><svg class="a" style="left:1121px;top:1524.0px" width="17" height="11" viewBox="0 0 17 11"><path d="M1.5 1.5 L8.3 8.9 L15.1 1.5" fill="none" stroke="#3a4047" stroke-width="2.25" stroke-linecap="round" stroke-linejoin="round"/></svg><div class="inp" style="left:1218.3px;top:1508.0px;width:111.2px"></div><div class="txt" style="left:1235.8px;top:1517.5px">BDT</div><div class="ot" style="top:1507.7px;background:#fff"></div><div class="a" style="left:1365.5px;top:1516.8px;width:5px;height:5px;border-radius:50%;background:#80858d"></div><div class="a" style="left:1365.5px;top:1525.0px;width:5px;height:5px;border-radius:50%;background:#80858d"></div><div class="a" style="left:1365.5px;top:1532.8px;width:5px;height:5px;border-radius:50%;background:#80858d"></div><div class="txt" style="left:1378px;top:1518.7px;font-size:20px;letter-spacing:0.4px;-webkit-text-stroke:0.4px #2d333a">Price</div><svg class="a" style="left:1650px;top:1523.5px" width="14" height="10" viewBox="0 0 14 10"><path d="M0 0 H14 L7 10 Z" fill="#80858d"/></svg><div class="cmd" style="top:1508.1px"></div><div class="btn" style="left:2097px;top:1508.9px"><svg class="a" style="left:0;top:0" width="45" height="39" viewBox="0 0 45 39"><path d="M14.4 12.9 H30 V15.7 H14.4 Z" fill="#fff"/><path d="M18.8 13.3 Q18.9 10.7 21.4 10.7 H22.5 Q25.1 10.7 25.1 13.3 Z" fill="#fff"/><path d="M15.3 15.4 H29.1 V27.1 Q29.1 28.7 27.5 28.7 H16.9 Q15.3 28.7 15.3 27.1 Z" fill="#fff"/><rect x="19.1" y="16.9" width="2" height="8.6" fill="#62aef7"/><rect x="23.6" y="16.9" width="2.1" height="8.6" fill="#62aef7"/></svg></div><div class="btn" style="left:2153px;top:1508.9px"><svg class="a" style="left:0;top:0" width="45" height="39" viewBox="0 0 45 39"><path d="M22.85 12.2 V28.1 M14.9 20.3 H30.8" stroke="#fff" stroke-width="2.55"/></svg></div><div class="a" style="left:73px;top:1568.5px;width:2148px;height:80.0px;background:#f8f9fa"></div><div class="a" style="left:86px;top:1607.0px;width:19px;height:2px;background:#3a4047;border-radius:1px"></div><div class="a" style="left:86px;top:1613.2px;width:19px;height:2px;background:#3a4047;border-radius:1px"></div><div class="a" style="left:86px;top:1619.7px;width:19px;height:2px;background:#3a4047;border-radius:1px"></div><div class="inp" style="left:118.3px;top:1588.0px;width:314.7px"></div><div class="txt" style="left:131.6px;top:1597.5px;width:270px;overflow:hidden">Sale Price[sale_price]</div><svg class="a" style="left:405.5px;top:1604.0px" width="17" height="11" viewBox="0 0 17 11"><path d="M1.5 1.5 L8.3 8.9 L15.1 1.5" fill="none" stroke="#3a4047" stroke-width="2.25" stroke-linecap="round" stroke-linejoin="round"/></svg><div class="inp" style="left:502.3px;top:1588.0px;width:111.4px"></div><div class="tog" style="left:642.8px;top:1588.8px"><div class="on" style="left:0;width:94.4px"></div><div class="tg" style="left:11.8px;top:11.4px;color:#fff;font-weight:700">Attribute</div><div class="a" style="left:94.4px;top:0;width:2px;height:100%;background:#e9ebee"></div><div class="tg" style="left:109.4px;top:11.4px;color:#2d333a;-webkit-text-stroke:0.35px #2d333a;letter-spacing:0.2px">Text</div></div><div class="inp" style="left:834px;top:1588.0px;width:314.5px"></div><div class="txt" style="left:847px;top:1597.5px">Price</div><svg class="a" style="left:1121px;top:1604.0px" width="17" height="11" viewBox="0 0 17 11"><path d="M1.5 1.5 L8.3 8.9 L15.1 1.5" fill="none" stroke="#3a4047" stroke-width="2.25" stroke-linecap="round" stroke-linejoin="round"/></svg><div class="inp" style="left:1218.3px;top:1588.0px;width:111.2px"></div><div class="txt" style="left:1235.8px;top:1597.5px">BDT</div><div class="ot" style="top:1587.7px;background:#f8f9fa"></div><div class="a" style="left:1365.5px;top:1596.8px;width:5px;height:5px;border-radius:50%;background:#80858d"></div><div class="a" style="left:1365.5px;top:1605.0px;width:5px;height:5px;border-radius:50%;background:#80858d"></div><div class="a" style="left:1365.5px;top:1612.8px;width:5px;height:5px;border-radius:50%;background:#80858d"></div><div class="txt" style="left:1378px;top:1598.7px;font-size:20px;letter-spacing:0.4px;-webkit-text-stroke:0.4px #2d333a">Price</div><svg class="a" style="left:1650px;top:1603.5px" width="14" height="10" viewBox="0 0 14 10"><path d="M0 0 H14 L7 10 Z" fill="#80858d"/></svg><div class="cmd" style="top:1588.1px"></div><div class="btn" style="left:2097px;top:1588.9px"><svg class="a" style="left:0;top:0" width="45" height="39" viewBox="0 0 45 39"><path d="M14.4 12.9 H30 V15.7 H14.4 Z" fill="#fff"/><path d="M18.8 13.3 Q18.9 10.7 21.4 10.7 H22.5 Q25.1 10.7 25.1 13.3 Z" fill="#fff"/><path d="M15.3 15.4 H29.1 V27.1 Q29.1 28.7 27.5 28.7 H16.9 Q15.3 28.7 15.3 27.1 Z" fill="#fff"/><rect x="19.1" y="16.9" width="2" height="8.6" fill="#62aef7"/><rect x="23.6" y="16.9" width="2.1" height="8.6" fill="#62aef7"/></svg></div><div class="btn" style="left:2153px;top:1588.9px"><svg class="a" style="left:0;top:0" width="45" height="39" viewBox="0 0 45 39"><path d="M22.85 12.2 V28.1 M14.9 20.3 H30.8" stroke="#fff" stroke-width="2.55"/></svg></div><svg class="a" style="left:1369px;top:1070px" width="20" height="11" viewBox="0 0 20 11"><path d="M10 0.5 L19.5 10.5 H0.5 Z" fill="#4b5158"/></svg><div class="a" style="left:1356.3px;top:1080px;width:317px;height:286px;background:#fff;border:2px solid #8d939a;border-bottom-width:1.5px;box-shadow:0 6px 16px rgba(0,0,0,0.30), 0 0 10px rgba(0,0,0,0.22);overflow:hidden"><div class="a" style="left:0;top:3.4px;width:100%;height:34px;background:#efefef"></div><div class="txt" style="left:11.5px;top:9.9px;font-size:20px;font-weight:400;letter-spacing:0.65px;-webkit-text-stroke:0.25px #2d333a">Select Attribute</div><div class="a" style="left:0;top:37.3px;width:100%;height:34px;background:#afcbf5"></div><div class="txt" style="left:11.5px;top:43.8px;font-size:20px;font-weight:700;letter-spacing:0px;">Default</div><div class="a" style="left:0;top:71.2px;width:100%;height:34px;background:#efefef"></div><div class="txt" style="left:11.5px;top:77.7px;font-size:20px;font-weight:400;letter-spacing:0.65px;-webkit-text-stroke:0.25px #2d333a">Strip Tags</div><div class="a" style="left:0;top:105.1px;width:100%;height:34px;background:#fff"></div><div class="txt" style="left:11.5px;top:111.6px;font-size:20px;font-weight:400;letter-spacing:0.65px;-webkit-text-stroke:0.25px #2d333a">UTF-8 Encode</div><div class="a" style="left:0;top:139.0px;width:100%;height:34px;background:#efefef"></div><div class="txt" style="left:11.5px;top:145.5px;font-size:20px;font-weight:400;letter-spacing:0.65px;-webkit-text-stroke:0.25px #2d333a">htmlentities</div><div class="a" style="left:0;top:172.9px;width:100%;height:34px;background:#fff"></div><div class="txt" style="left:11.5px;top:179.4px;font-size:20px;font-weight:400;letter-spacing:0.65px;-webkit-text-stroke:0.25px #2d333a">Integer</div><div class="a" style="left:0;top:206.79999999999998px;width:100%;height:34px;background:#efefef"></div><div class="txt" style="left:11.5px;top:213.29999999999998px;font-size:20px;font-weight:400;letter-spacing:0.65px;-webkit-text-stroke:0.25px #2d333a">Price</div><div class="a" style="left:0;top:240.7px;width:100%;height:34px;background:#fff"></div><div class="txt" style="left:11.5px;top:247.2px;font-size:20px;font-weight:400;letter-spacing:0.65px;-webkit-text-stroke:0.25px #2d333a">Rounded Price</div><div class="a" style="left:0;top:274.59999999999997px;width:100%;height:34px;background:#efefef"></div></div></body></html>
